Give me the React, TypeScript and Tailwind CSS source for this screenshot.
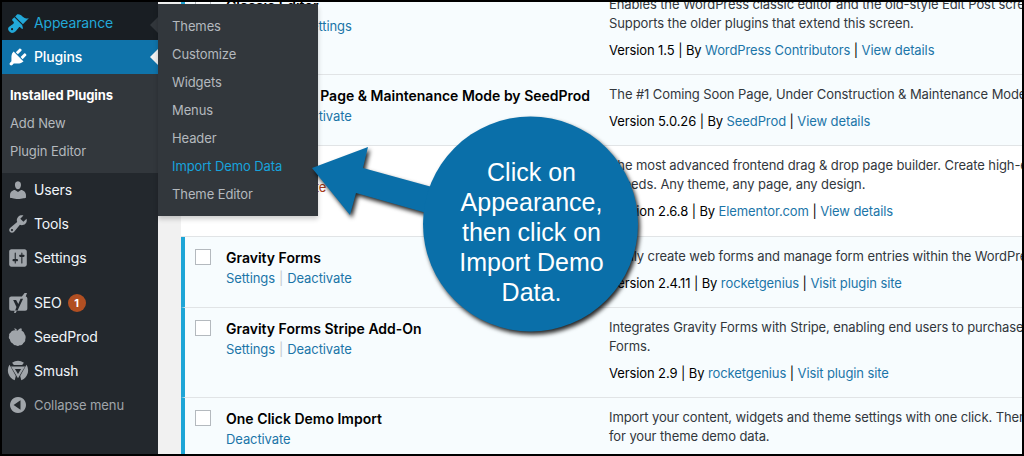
const ICONS: Record<string, string> = {
  brush: "M14.48 11.06L7.41 3.99l1.5-1.5c.5-.56 2.3-.47 3.51.32 1.21.8 1.43 1.28 2.91 2.1 1.18.64 2.45 1.26 4.45.85zm-.71.71L6.7 4.7 4.93 6.47c-.39.39-.39 1.02 0 1.41l1.06 1.06c.39.39.39 1.03 0 1.42-.6.6-1.43 1.11-2.21 1.69-.35.26-.7.53-1.01.84C1.43 13.23 1 14.5 1 15.5c0 1.4 2.1 3.5 3.5 3.5 1.4 0 2.4-.6 3.7-1.8.31-.31.58-.66.84-1.01.58-.78 1.09-1.61 1.69-2.21.39-.39 1.03-.39 1.42 0l1.06 1.06c.39.39 1.02.39 1.41 0zM3.6 15.6a1 1 0 1 0 2 0a1 1 0 1 0-2 0z",
  plug: "M13.11 4.36L9.87 7.6 8 5.73l3.24-3.24c.35-.34 1.05-.2 1.56.32.52.51.66 1.21.31 1.55zm-8 1.77l.91-1.12 9.01 9.01-1.19.84c-.71.71-2.63 1.16-3.82 1.16H6.14L4.9 17.26c-.59.59-1.54.59-2.12 0-.59-.58-.59-1.53 0-2.12l1.24-1.24v-3.88c0-1.13.4-3.19 1.09-3.89zm7.26 3.97l3.24-3.24c.34-.35 1.04-.21 1.55.31.52.51.66 1.21.31 1.55l-3.24 3.25z",
  user: "M10 9.25c-2.27 0-2.73-3.44-2.73-3.44C7 4.02 7.82 2 9.97 2c2.16 0 2.98 2.02 2.71 3.81 0 0-.41 3.44-2.68 3.44zm0 2.57L12.72 10c2.39 0 4.52 2.33 4.52 4.53v2.49s-3.65 1.13-7.24 1.13c-3.65 0-7.24-1.13-7.24-1.13v-2.49c0-2.25 1.94-4.48 4.47-4.48z",
  wrench: "M16.68 9.77c-1.34 1.34-3.3 1.67-4.95.99l-5.41 6.52c-.99.99-2.59.99-3.58 0s-.99-2.59 0-3.57l6.52-5.42c-.68-1.65-.35-3.61.99-4.95 1.28-1.28 3.12-1.62 4.72-1.06l-2.89 2.89 2.82 2.82 2.86-2.87c.53 1.58.18 3.39-1.08 4.65zM3.81 16.21c.4.39 1.04.39 1.43 0 .4-.4.4-1.04 0-1.43-.39-.4-1.03-.4-1.43 0-.39.39-.39 1.03 0 1.43z",
  sliders: "M18 16V4c0-1.1-.9-2-2-2H4c-1.1 0-2 .9-2 2v12c0 1.1.9 2 2 2h12c1.1 0 2-.9 2-2zM8 11h1c.55 0 1 .45 1 1s-.45 1-1 1H8v1.5c0 .28-.22.5-.5.5s-.5-.22-.5-.5V13H6c-.55 0-1-.45-1-1s.45-1 1-1h1V5.5c0-.28.22-.5.5-.5s.5.22.5.5V11zm5-2h-1c-.55 0-1-.45-1-1s.45-1 1-1h1V5.5c0-.28.22-.5.5-.5s.5.22.5.5V7h1c.55 0 1 .45 1 1s-.45 1-1 1h-1v5.5c0 .28-.22.5-.5.5s-.5-.22-.5-.5V9z",
  yoast: "M4 4h9.5l2.5-3h2.2l-1.2 3c1 .3 1.5 1 1.5 2v9c0 1.4-.8 2-2 2H9l-1.2 2H6.4l.6-2H4c-1.2 0-2-.7-2-2V6c0-1.3.8-2 2-2zm1.6 3.2l3 6.4-1.2 3.2h2.2l5-10.6h-2.3l-2 4.6-2-3.6z",
  seed: "M9 3.5c-.4-.9-1.3-1.4-2.5-1.5.3 1 .9 1.7 1.8 2.1C6 3.4 3.8 4.6 3.2 6.2c-1 .5-1.6 1.5-1.2 2.6-.6 1.2-.4 2.6.7 3.4.1 1.6 1 2.9 2.3 3.5.7 1.2 1.9 2 3.1 1.9 1 .8 2.4.8 3.4 0 1.5.1 2.8-.8 3.4-2.1 1.2-.8 1.9-2.1 1.7-3.5.7-1.5.4-3.3-.6-4.5-.3-1.5-1.4-2.7-2.7-3.2.3-.9.1-1.7-.4-2.3-1.3.3-2.6.9-3.1 2.1-.5-.1-.9-.1-1.3-.1z",
  smush: "M4.6 2.6A9.4 9.4 0 0 1 15.4 2.6L13.8 4.6H6.2zM3.6 6h12.8L10 16.6zM7.2 8.2l2.8 4.6 2.8-4.6zM2.3 4.4L8 14.6l-1 3.7A9.4 9.4 0 0 1 2.3 4.4zM17.7 4.4A9.4 9.4 0 0 1 13 18.3L12 14.6z",
  back: "M10 2a8 8 0 1 0 .01 0zm2.5 3.2v9.6L5.6 10z",
};

function Icon({ name, className }: { name: string; className: string }) {
  return (
    <svg viewBox="0 0 20 20" className={className} fill="currentColor" fillRule="evenodd">
      <path d={ICONS[name]} />
    </svg>
  );
}

function MenuRow({ icon, label, extra }: { icon: string; label: string; extra?: React.ReactNode }) {
  return (
    <div className="flex h-[34px] items-center text-[#f0f5fa]">
      <div className="flex w-[32px] justify-center text-[#a0a5aa]">
        <Icon name={icon} className="h-[22px] w-[22px]" />
      </div>
      <span className="pb-[2px]">{label}</span>
      {extra}
    </div>
  );
}

function Sep() {
  return <span className="mx-[4px] text-[#c5c9cc]">|</span>;
}

const A = ({ children }: { children: React.ReactNode }) => <span className="text-[#1b75a8]">{children}</span>;

function Row({
  h,
  active = true,
  title,
  actions,
  desc,
  meta,
}: {
  h: string;
  active?: boolean;
  title: string;
  actions: React.ReactNode;
  desc: string[];
  meta?: React.ReactNode;
}) {
  return (
    <div
      className={`flex shrink-0 overflow-hidden border-b border-[#e1e4e6] ${h} ${
        active ? "border-l-4 border-l-[#1ea5d6] bg-[#f7fcfe] pl-[10px]" : "bg-white pl-[14px]"
      }`}
    >
      <div className="mr-[15px] mt-[12px] h-[16px] w-[16px] shrink-0 border border-[#b4b9be] bg-white" />
      <div className="w-[383px] shrink-0 whitespace-nowrap pt-[11px]">
        <div className="h-[19px] text-[14px] font-semibold leading-[19px] tracking-normal text-black">{title}</div>
        <div className="mt-[2px] h-[19px] leading-[19px]">{actions}</div>
      </div>
      <div className="min-w-0 flex-1 whitespace-nowrap pt-[10px] text-[#32373c]">
        {desc.map((d) => (
          <div key={d} className="h-[19px] leading-[19px]">
            {d}
          </div>
        ))}
        {meta && <div className="mt-[8px] h-[19px] leading-[19px] text-black">{meta}</div>}
      </div>
    </div>
  );
}

export default function App() {
  const flyout = ["Themes", "Customize", "Widgets", "Menus", "Header", "Import Demo Data", "Theme Editor"];
  return (
    <div className="relative h-[456px] w-[1024px] overflow-hidden bg-black p-[2px] font-['Inter','Liberation_Sans',sans-serif] text-[13px] tracking-[-0.1px]">
      <div className="flex h-full">
        <aside className="w-[156px] shrink-0 bg-[#23282d] text-[14px] tracking-[-0.15px]">
          <div className="h-[4px] bg-[#191e23]" />
          <div className="relative flex h-[34px] items-center bg-[#191e23] text-[#22a8d8]">
            <div className="flex w-[32px] justify-center">
              <Icon name="brush" className="h-[22px] w-[22px]" />
            </div>
            <span className="pb-[2px]">Appearance</span>
            <div className="absolute right-0 top-[11px] h-0 w-0 border-y-[8px] border-r-[8px] border-y-transparent border-r-[#32373c]" />
          </div>
          <div className="relative flex h-[34px] items-center bg-[#0f73aa] font-medium text-white">
            <div className="flex w-[32px] justify-center">
              <Icon name="plug" className="h-[22px] w-[22px]" />
            </div>
            <span className="pb-[2px]">Plugins</span>
            <div className="absolute right-0 top-[9px] h-0 w-0 border-y-[8px] border-r-[8px] border-y-transparent border-r-[#f1f1f1]" />
          </div>
          <div className="flex h-[99px] flex-col bg-[#32373c] pb-[6px] pl-[8px] pt-[8px] text-[13px] tracking-[-0.1px] text-[#b4b9be]">
            <div className="flex h-[28px] items-center font-bold text-white">Installed Plugins</div>
            <div className="flex h-[28px] items-center">Add New</div>
            <div className="flex h-[28px] items-center">Plugin Editor</div>
          </div>
          <MenuRow icon="user" label="Users" />
          <MenuRow icon="wrench" label="Tools" />
          <MenuRow icon="sliders" label="Settings" />
          <div className="h-[11px]" />
          <MenuRow
            icon="yoast"
            label="SEO"
            extra={
              <span className="ml-[6px] flex h-[18px] w-[18px] items-center justify-center rounded-full bg-[#b14f22] text-[11px] font-bold text-white">
                1
              </span>
            }
          />
          <MenuRow icon="seed" label="SeedProd" />
          <MenuRow icon="smush" label="Smush" />
          <div className="flex h-[34px] items-center text-[13px] tracking-[-0.1px] text-[#a0a5aa]">
            <div className="flex w-[32px] justify-center">
              <Icon name="back" className="h-[20px] w-[20px]" />
            </div>
            <span className="pt-[2px]">Collapse menu</span>
          </div>
        </aside>

        <main className="flex min-w-0 flex-1 overflow-hidden bg-[#f1f1f1] pl-[23px]">
          <div className="flex min-w-0 flex-1 flex-col bg-white">
            <Row
              h="h-[90px] -mt-[17px]"
              title="Classic Editor"
              actions={
                <>
                  <A>Deactivate</A>
                  <Sep />
                  <A>Settings</A>
                </>
              }
              desc={[
                "Enables the WordPress classic editor and the old-style Edit Post screen with TinyMCE, Meta Boxes, etc.",
                "Supports the older plugins that extend this screen.",
              ]}
              meta={
                <>
                  Version 1.5 | By <A>WordPress Contributors</A> | <A>View details</A>
                </>
              }
            />
            <Row
              h="h-[71px]"
              title="Coming Soon Page & Maintenance Mode by SeedProd"
              actions={
                <>
                  <A>Settings</A>
                  <Sep />
                  <A>Deactivate</A>
                </>
              }
              desc={["The #1 Coming Soon Page, Under Construction & Maintenance Mode plugin for WordPress."]}
              meta={
                <>
                  Version 5.0.26 | By <A>SeedProd</A> | <A>View details</A>
                </>
              }
            />
            <Row
              h="h-[91px]"
              active={false}
              title="Elementor"
              actions={
                <>
                  <A>Activate</A>
                  <Sep />
                  <span className="text-[#a83a1a]">Delete</span>
                </>
              }
              desc={[
                "The most advanced frontend drag & drop page builder. Create high-end, pixel perfect websites at record",
                "speeds. Any theme, any page, any design.",
              ]}
              meta={
                <>
                  Version 2.6.8 | By <A>Elementor.com</A> | <A>View details</A>
                </>
              }
            />
            <Row
              h="h-[71px]"
              title="Gravity Forms"
              actions={
                <>
                  <A>Settings</A>
                  <Sep />
                  <A>Deactivate</A>
                </>
              }
              desc={["Easily create web forms and manage form entries within the WordPress admin."]}
              meta={
                <>
                  Version 2.4.11 | By <A>rocketgenius</A> | <A>Visit plugin site</A>
                </>
              }
            />
            <Row
              h="h-[90px]"
              title="Gravity Forms Stripe Add-On"
              actions={
                <>
                  <A>Settings</A>
                  <Sep />
                  <A>Deactivate</A>
                </>
              }
              desc={[
                "Integrates Gravity Forms with Stripe, enabling end users to purchase goods and services through Gravity",
                "Forms.",
              ]}
              meta={
                <>
                  Version 2.9 | By <A>rocketgenius</A> | <A>Visit plugin site</A>
                </>
              }
            />
            <Row
              h="h-[60px]"
              title="One Click Demo Import"
              actions={<A>Deactivate</A>}
              desc={[
                "Import your content, widgets and theme settings with one click. Theme authors! Enable simple demo import",
                "for your theme demo data.",
              ]}
            />
          </div>
        </main>
      </div>

      {/* flyout submenu */}
      <div className="absolute left-[158px] top-[4px] h-[212px] w-[160px] bg-[#32373c] pb-[7px] pl-[14px] pt-[9px] text-[#b4b9be] shadow-[0_3px_5px_rgba(0,0,0,0.2)]">
        {flyout.map((f) => (
          <div key={f} className={`flex h-[28px] items-center ${f === "Import Demo Data" ? "text-[#17a3dc]" : ""}`}>
            {f}
          </div>
        ))}
      </div>

      {/* callout */}
      <svg
        viewBox="0 0 1024 456"
        className="absolute left-0 top-0 h-[456px] w-[1024px] drop-shadow-[2px_3px_2px_rgba(0,0,0,0.85)]"
      >
        <path d="M312 168L368 147L363 168L432 187L430 214L356 193L350 215Z" fill="#0a6fa9" />
        <circle cx="530.5" cy="224" r="107.5" fill="#0a6fa9" />
      </svg>
      <div className="absolute left-[424px] top-[157px] w-[215px] text-center font-['Liberation_Sans',sans-serif] text-[25px] leading-[30px] tracking-normal text-white">
        Click on
        <br />
        Appearance,
        <br />
        then click on
        <br />
        Import Demo
        <br />
        Data.
      </div>
    </div>
  );
}
